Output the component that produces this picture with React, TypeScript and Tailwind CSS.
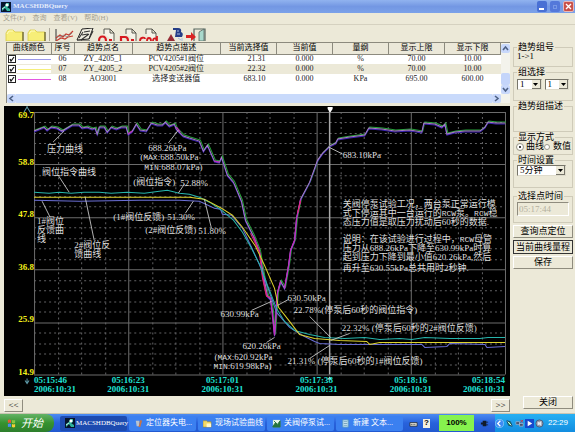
import type { ReactNode } from "react";

const songti = "font-['Liberation_Serif','Noto_Sans_CJK_SC',serif]";

function AppMark() {
  return (
    <svg viewBox="0 0 10 10" className="size-[10px] shrink-0">
      <rect width="10" height="10" fill="#06142c" />
      <path d="M5 1h3v3l-2 1 3 2v2H6L4 6 1 9V6l3-2z" fill="#2fb39a" />
      <path d="M5 2h2v2H5zM1 7l3-2" fill="#fff" stroke="#fff" strokeWidth=".7" />
    </svg>
  );
}

function TitleBar() {
  return (
    <header className="flex h-[13px] items-center bg-linear-to-b from-[#91b3ef] via-[#7397e3] to-[#7ba1e9] px-px">
      <AppMark />
      <h1 className="ml-[2px] flex-1 font-['Liberation_Serif',serif] text-[7px] leading-none font-bold text-[#e4ecfb]">
        MACSHDBQuery
      </h1>
      <div className="flex gap-[3px]">
        <button aria-label="最小化" className="flex h-[11px] w-[10px] items-end rounded-xs bg-[#4970d4] p-[2px]">
          <span className="h-[2px] w-[5px] bg-white" />
        </button>
        <button aria-label="最大化" className="h-[11px] w-[10px] rounded-xs bg-[#5478da] p-[3px]">
          <span className="block size-[4px] border border-[#7898e6]" />
        </button>
        <button aria-label="关闭窗口" className="h-[11px] w-[11px] rounded-xs border border-[#e6b9b9] bg-[#c9504a]">
          <svg viewBox="0 0 9 9">
            <path d="M2 2l5 5M7 2l-5 5" stroke="#fff" strokeWidth="1.4" />
          </svg>
        </button>
      </div>
    </header>
  );
}

function MenuBar() {
  return (
    <nav className="flex h-[12px] items-center gap-[7px] border-b border-[#d5d1c0] px-[3px] text-[7px] leading-none text-[#a5a190]">
      <button>文件(F)</button>
      <button>查询</button>
      <button>查看(V)</button>
      <button>帮助(H)</button>
    </nav>
  );
}

function ToolButton({ label, children }: { label: string; children: ReactNode }) {
  return (
    <button aria-label={label} className="h-[13px] w-[20px] shrink-0 overflow-hidden">
      <svg viewBox="0 0 20 13" className="h-[13px] w-[20px]" fill="none">
        {children}
      </svg>
    </button>
  );
}

function Folder() {
  return (
    <>
      <path d="M1 13V5l2-3h5l2 2h8v9z" fill="#f7ee78" stroke="#d8ca45" strokeWidth=".8" />
      <path d="M2 6l2-3h4" stroke="#fffbc0" />
      <path d="M18 4v9" stroke="#5a5430" strokeWidth="1.2" />
    </>
  );
}

function Sheet() {
  return <path d="M7 6V1h6l4 4v8M13 1v4h4" fill="#f5f3e8" stroke="#4c4c44" strokeWidth=".9" />;
}

function Toolbar() {
  return (
    <div className="flex h-[17px] items-start overflow-hidden pt-[3px] pl-[5px]">
      <ToolButton label="打开"><Folder /></ToolButton>
      <span className="w-[2px]" />
      <ToolButton label="打开组"><Folder /></ToolButton>
      <span className="mx-[2px] h-[13px] w-px bg-[#aca899]" />
      <span className="w-[3px]" />
      <ToolButton label="趋势曲线">
        <path d="M1 1v12" stroke="#333" />
        <path d="M1 10l4-3 3 2 3-3 3 1 4-4M1 13l5-3 4 1 3-2 5-1" stroke="#c73b30" strokeWidth="1.2" />
        <path d="M2 8l3 1 4-2 3 2 5-4" stroke="#777" strokeWidth=".7" />
      </ToolButton>
      <ToolButton label="打印">
        <path d="M7 1l11-1-4 11-12 1z" fill="#eeece0" stroke="#222" />
        <path d="M9 4l6-1M7 7l6-1M4 10l4-6M6 12l8-6M14 11l4-8M2 13h13" stroke="#333" strokeWidth="1.1" />
      </ToolButton>
      <span className="w-[2px]" />
      <ToolButton label="历史查询">
        <Sheet />
        <path d="M2 13c0-6 7-6 7 0M12 12h3" stroke="#d71920" strokeWidth="2.2" />
      </ToolButton>
      <span className="w-[2px]" />
      <ToolButton label="打印页面">
        <Sheet />
        <path d="M2 13V9h4c3 0 3 2 3 4M12 12h3" stroke="#d71920" strokeWidth="2.2" />
      </ToolButton>
      <ToolButton label="命令">
        <Sheet />
        <path d="M1 13c0-4 5-4 5-2M8 13c0-4 4-4 4 0M14 13c0-4 4-3 4 0M18 8v5" stroke="#d71920" strokeWidth="1.8" />
      </ToolButton>
      <span className="w-[7px]" />
      <ToolButton label="字体">
        <path d="M1 13l4-7 4 7z" fill="#982c35" />
        <path d="M7 0h5q4 0 3 4 3 1 1 5H9l1-7H7z" fill="#243d87" />
        <path d="M11 3h2M11 6h3M12 10l3 2M16 10v3" stroke="#a9bade" />
      </ToolButton>
      <ToolButton label="退出">
        <path d="M8 13V1h11v12" stroke="#55665f" strokeWidth="1.2" />
        <path d="M13 4l5-3v12h-5z" fill="#a9d9cc" stroke="#55665f" strokeWidth=".8" />
        <path d="M0 7h5V4l5 5-5 4v-3H0z" fill="#d92424" />
      </ToolButton>
    </div>
  );
}

const points = [
  { no: "06", name: "ZY_4205_1", desc: "PCV4205#1阀位", sel: "21.31", cur: "0.000", unit: "%", hi: "70.00", lo: "10.00", color: "bg-[#9a98e8]" },
  { no: "07", name: "ZY_4205_2", desc: "PCV4205#2阀位", sel: "22.32", cur: "0.000", unit: "%", hi: "70.00", lo: "10.00", color: "bg-[#f5ee7a]" },
  { no: "08", name: "AO3001", desc: "选择变送器值", sel: "683.10", cur: "0.000", unit: "KPa", hi: "695.00", lo: "600.00", color: "bg-[#e458e0]" },
];

const headings = ["曲线颜色", "序号", "趋势点名", "趋势点描述", "当前选择值", "当前值", "量纲", "显示上限", "显示下限"];

function ScrollArrow({ label, d }: { label: string; d: string }) {
  return (
    <button aria-label={label} className="size-[9px] shrink-0 rounded-xs bg-[#c8d8fb]">
      <svg viewBox="0 0 9 9" fill="none">
        <path d={d} stroke="#4d6185" strokeWidth="1.6" />
      </svg>
    </button>
  );
}

function PointTable() {
  return (
    <div className="ml-[6px] flex h-[61px] flex-col border-t border-l border-[#8c8a7e] bg-white">
      <div className="flex min-h-0 flex-1">
        <div className="flex-1">
          <table className="w-full table-fixed border-collapse text-center text-[8px] leading-none text-[#222]">
            <colgroup>
              <col className="w-[44px]" />
              <col className="w-[23px]" />
              <col className="w-[58px]" />
              <col />
              <col className="w-[56px]" />
              <col className="w-[56px]" />
              <col className="w-[56px]" />
              <col className="w-[56px]" />
              <col className="w-[56px]" />
            </colgroup>
            <thead>
              <tr className="h-[11px] bg-[#ebe8d9]">
                {headings.map((h) => (
                  <th key={h} className="border-r border-b border-[#8c8a7e] p-0 font-normal whitespace-nowrap text-black">
                    {h}
                  </th>
                ))}
              </tr>
            </thead>
            <tbody>
              {points.map((p) => (
                <tr key={p.no} className="h-[10px] even:bg-[#ece9d8]">
                  <td className="p-0">
                    <label className="flex items-center gap-[2px] bg-white pl-px">
                      <input
                        type="checkbox"
                        defaultChecked
                        aria-label={p.name}
                        className="sr-only"
                      />
                      <svg viewBox="0 0 8 8" className="size-[8px]" fill="none">
                        <rect x=".5" y=".5" width="7" height="7" fill="#fff" stroke="#222" />
                        <path d="M2 4l1 2 3-4" stroke="#111" strokeWidth="1.2" />
                      </svg>
                      <span className={`h-px flex-1 ${p.color}`} />
                    </label>
                  </td>
                  <td className="p-0">{p.no}</td>
                  <td className="p-0">{p.name}</td>
                  <td className="p-0 whitespace-nowrap">{p.desc}</td>
                  <td className="py-0 pr-[11px] pl-0 text-right">{p.sel}</td>
                  <td className="p-0">{p.cur}</td>
                  <td className="p-0">{p.unit}</td>
                  <td className="p-0">{p.hi}</td>
                  <td className="p-0">{p.lo}</td>
                </tr>
              ))}
            </tbody>
          </table>
        </div>
        <div className="flex w-[9px] flex-col bg-[#f3f3ec] pt-px">
          <ScrollArrow label="向上" d="M2 6l2.500-3 2.500 3" />
          <span className="flex-1" />
          <span className="h-[12px] rounded-xs bg-[#c4d5fa]" />
          <ScrollArrow label="向下" d="M2 3l2.500 3 2.500-3" />
        </div>
      </div>
      <div className="flex h-[9px] bg-[#f3f3ec] pr-[9px]">
        <ScrollArrow label="向左" d="M6 2l-3 2.500 3 2.500" />
        <span className="flex-1 bg-[#c9dafb]" />
        <ScrollArrow label="向右" d="M3 2l3 2.500-3 2.500" />
      </div>
    </div>
  );
}

const left = 35;
const right = 505;
const top = 112;
const bottom = 374;

const pressure =
  "35,131 40,129 45,127 48,130 52,127 58,128 63,131 68,128 73,125 80,125 83,128 88,127 93,129 96,128 98,134 100,127 105,127 108,132 112,127 117,129 122,127 127,127 129,134 133,131 137,124 141,130 147,131 152,123 158,125 163,125 166,122 170,126 175,124 177,129 180,132 184,136 190,138 200,141 204,151 208,145 215,161 220,162 222,157 228,175 234,182 242,201 246,220 254,236 260,251 264,275 268,296 271,299 273,312 275,335 277,305 278,292 281,281 285,288 289,265 291,250 295,240 297,218 301,199 310,182 318,160 323,153 330,146 336,143 338,139 350,137 365,135 369,128 382,129 395,131 410,130 422,132 424,123 435,124 442,127 445,124 447,134 455,132 465,131 480,131 485,127 488,122 496,123 505,123";

const command =
  "35,192 50,193 60,192 72,193 85,192 100,192 112,193 128,192 145,193 160,191 168,190 180,193 190,194 200,197 210,202 222,210 234,220 243,232 252,248 260,264 268,285 277,308 285,321 295,330 310,334 325,337 345,338 365,337 380,339 400,338 412,339 425,337 450,338 480,338 488,337 505,337";

const valve2 =
  "35,197 100,197 176,197 190,197 205,199 222,208 233,215 243,227 256,246 265,265 275,288 279,307 290,321 300,334 315,338 340,340 367,341 370,344 380,342 505,342";

const valve1 =
  "35,200 80,201 140,200 180,200 200,201 215,208 221,209 223,214 232,215 243,228 252,247 262,269 270,292 277,312 290,327 303,335 315,341 320,343 340,344 422,344 425,347 447,346 450,343 485,344 487,347 505,346";

const leaders =
  "M65 131L54 142M59 175L70 192M43 201L51 217M86 197L95 240M179 130L169 143M185 184L179 193M194 201L186 213M205 199L212 228M329 147L343 154M272 301L252 310M278 305L289 299M310 316L331 337M350 333L331 340M275 337L267 342M310 358L330 345";

const notes: [number, number, string][] = [
  [48, 152, "压力曲线"],
  [43, 175, "阀位指令曲线"],
  [149, 151, "688.26kPa"],
  [141, 160, "(MAX:688.50kPa"],
  [145, 170, "MIN:688.07kPa)"],
  [134, 185, "(阀位指令)"],
  [181, 186, "52.88%"],
  [114, 220, "(1#阀位反馈)"],
  [168, 220, "51.30%"],
  [146, 233, "(2#阀位反馈)"],
  [199, 234, "51.80%"],
  [38, 224, "1#阀位"],
  [38, 233, "反馈曲"],
  [38, 242, "线"],
  [75, 248, "2#阀位反"],
  [75, 257, "馈曲线"],
  [343, 158, "683.10kPa"],
  [343, 207, "关阀停泵试验工况，两台泵正常运行模"],
  [343, 216, "式下停运其中一台运行的RCW泵。RCW稳"],
  [343, 225, "态压力值是取压力扰动后60秒的数据."],
  [343, 242, "说明：在该试验进行过程中，RCW母管"],
  [343, 251, "压力从688.26kPa下降至630.99kPa时算"],
  [343, 260, "起到压力下降到最小值620.26kPa,然后"],
  [343, 271, "再升至630.55kPa总共用时2秒钟."],
  [221, 317, "630.99kPa"],
  [288, 301, "630.50kPa"],
  [294, 313, "22.78%(停泵后60秒的阀位指令)"],
  [342, 331, "22.32% (停泵后60秒的2#阀位反馈)"],
  [243, 349, "620.26kPa"],
  [215, 360, "(MAX:620.92kPa"],
  [214, 369, "MIN:619.98kPa)"],
  [288, 364, "21.31% (停泵后60秒的1#阀位反馈)"],
];

const times: [number, string, "start" | "middle" | "end"][] = [
  [35, "05:15:46", "start"],
  [129, "05:16:23", "middle"],
  [223, "05:17:01", "middle"],
  [317, "05:17:38", "middle"],
  [411, "05:18:16", "middle"],
  [505, "05:18:54", "end"],
];

const levels = [
  { value: "69.7", baseline: 118 },
  { value: "58.8", baseline: 165 },
  { value: "47.8", baseline: 217 },
  { value: "36.8", baseline: 270 },
  { value: "25.9", baseline: 322 },
  { value: "14.9", baseline: 374 },
];

function Note({ x, y, text }: { x: number; y: number; text: string }) {
  return (
    <text x={x} y={y}>
      {text.split(/([A-Z]{3})/).map((part, i) =>
        i % 2 ? (
          <tspan key={i} className="font-['Liberation_Mono',monospace] text-[8px]">{part}</tspan>
        ) : (
          part
        ),
      )}
    </text>
  );
}

function TrendChart() {
  const minorX = Array.from({ length: 21 }, (_, i) => i).filter((i) => i % 4);
  const minorY = Array.from({ length: 26 }, (_, i) => i).filter((i) => i % 5);

  return (
    <svg viewBox="5 106 505 289" className={`block h-auto w-full bg-black text-[9px] ${songti}`} fill="none">
      <g stroke="#626264" strokeDasharray="2 3" strokeWidth="1">
        {minorX.map((i) => {
          const x = Math.round(left + ((right - left) * i) / 20) + 0.5;
          return <path key={i} d={`M${x} ${top}V${bottom}`} />;
        })}
        {minorY.map((i) => {
          const y = Math.round(top + ((bottom - top) * i) / 25) + 0.5;
          return <path key={i} d={`M${left} ${y}H${right}`} />;
        })}
      </g>
      <g stroke="#6c6c6c">
        {levels.map((level, i) => {
          const x = left + 94 * i + 0.5;
          const y = Math.round(top + ((bottom - top) * i) / 5) + 0.5;
          return <path key={level.value} d={`M${x} ${top}V${bottom}M${left} ${y}H${right}`} />;
        })}
      </g>
      <path d="M330 110V374" stroke="#a8a8a8" strokeWidth="1.500" />
      <path d="M328 107h5v2l-2 3h-1l-2-3zM328 379l2-3 2 3z" fill="#fff" />
      <path d="M25 112l3-5 3 5M28 107v-1M26 380l2 3 2-3M28 378v5" stroke="#5e9aa8" />

      <polyline points={pressure} stroke="#26a33a" transform="translate(1 -1)" />
      <polyline points={pressure} stroke="#3a22b8" transform="translate(0 1)" />
      <polyline points={pressure} stroke="#a97fc4" strokeWidth="1" />
      <path d="M129 134l4-3M177 127l4 5M215 161l5 1M254 236l6 15 3 24 4 20 4 3 4 37 2-30 1-13 3-11M285 288l4-23 2-15 4-10 2-22 4-19" stroke="#c02bc0" strokeWidth="1.200" />
      <path d="M251 233l9 19 3 26 4 18 4 1M298 213l3-12" stroke="#e22a6d" />
      <polyline points={valve1} stroke="#6b6fd6" />
      <polyline points={command} stroke="#27b5ac" />
      <polyline points={valve2} stroke="#dfd42c" />
      <path d={leaders} stroke="#dcdcdc" strokeWidth=".8" />

      <g fill="#dedede">
        {notes.map(([x, y, text]) => (
          <Note key={`${x}-${y}`} x={x} y={y} text={text} />
        ))}
      </g>
      <g fill="#f4f01c" textAnchor="end" className="font-bold">
        {levels.map((level) => (
          <text key={level.value} x={35} y={level.baseline}>{level.value}</text>
        ))}
      </g>
      <g fill="#1fe0d4" className="font-bold">
        {times.map(([x, time, anchor]) => (
          <text key={time} textAnchor={anchor}>
            <tspan x={x} y={382}>{time}</tspan>
            <tspan x={x} y={391}>2006:10:31</tspan>
          </text>
        ))}
      </g>
    </svg>
  );
}

const raised = "border border-t-white border-l-white border-r-[#8f8c7e] border-b-[#8f8c7e] bg-[#ece9d8] text-center leading-none text-black";

function Group({ title, className, children }: { title: string; className: string; children?: ReactNode }) {
  return (
    <fieldset className={`min-w-0 border border-[#cfcbb9] px-[3px] ${className}`}>
      <legend className="px-px text-[9px] leading-[10px] whitespace-nowrap text-black">{title}</legend>
      {children}
    </fieldset>
  );
}

function Dropdown({ label, options }: { label: string; options: string[] }) {
  return (
    <div className="relative min-w-0 flex-1">
      <select
        aria-label={label}
        className="block h-[11px] w-full appearance-none border border-t-[#77756a] border-r-[#dedbcb] border-b-[#dedbcb] border-l-[#77756a] bg-white px-[2px] text-[9px] leading-[9px] text-black"
      >
        {options.map((o) => (
          <option key={o}>{o}</option>
        ))}
      </select>
      <span className="pointer-events-none absolute top-px right-px flex h-[9px] w-[9px] items-center justify-center border-r border-b border-[#77756a] bg-[#ece9d8]">
        <svg viewBox="0 0 5 3" className="h-[3px] w-[5px]">
          <path d="M0 0h5L2.500 3z" fill="#000" />
        </svg>
      </span>
    </div>
  );
}

function Mode({ label, checked }: { label: string; checked?: boolean }) {
  return (
    <label className="flex items-center gap-[3px] whitespace-nowrap">
      <input
        type="radio"
        name="mode"
        defaultChecked={checked}
        className="size-[6px] appearance-none rounded-full border border-[#99978a] bg-white checked:border-2 checked:border-white checked:bg-black checked:outline checked:outline-[#99978a]"
      />
      {label}
    </label>
  );
}

function SidePanel() {
  return (
    <aside className="flex w-[60px] shrink-0 flex-col text-[9px] leading-none text-black">
      <Group title="趋势组号" className="h-[25px]">
        <output className="block">1-&gt;1</output>
      </Group>
      <Group title="组选择" className="h-[34px]">
        <div className="mt-[2px] flex gap-[3px]">
          <Dropdown label="组" options={["1", "2", "3"]} />
          <Dropdown label="子组" options={["1", "2", "3"]} />
        </div>
      </Group>
      <Group title="趋势组描述" className="h-[31px]" />
      <Group title="显示方式" className="h-[23px]">
        <div className="flex justify-between">
          <Mode label="曲线" checked />
          <Mode label="数值" />
        </div>
      </Group>
      <Group title="时间设置" className="h-[33px]">
        <div className="mr-[3px] flex">
          <Dropdown label="时间" options={["5分钟", "10分钟", "30分钟"]} />
        </div>
      </Group>
      <Group title="选择点时间" className="mt-[3px] h-[32px]">
        <input
          aria-label="时间点"
          disabled
          defaultValue="05:17:44"
          className="mt-px block h-[14px] w-full border border-t-[#8f8c7e] border-r-white border-b-white border-l-[#8f8c7e] bg-[#ece9d8] px-px text-[9px] text-[#b3b09f]"
        />
      </Group>
      <div className="mt-[2px] flex flex-col gap-[2px]">
        <button className={`h-[13px] ${raised}`}>查询点定位</button>
        <button className="h-[14px] border border-[#333] bg-[#ece9d8] text-center leading-none">当前曲线量程</button>
        <button className={`h-[13px] ${raised}`}>保存</button>
      </div>
      <span className="flex-1" />
      <button className={`mb-[4px] ml-[10px] h-[13px] ${raised}`}>关闭</button>
    </aside>
  );
}

function Task({ title, icon, active }: { title: string; icon: ReactNode; active?: boolean }) {
  return (
    <button
      className={`flex h-[15px] max-w-[67px] min-w-0 flex-1 items-center rounded-xs pl-[5px] leading-none whitespace-nowrap text-white ${
        active ? "gap-px bg-[#1d4bb0] text-[7px]" : "gap-[3px] bg-[#3b80f0] text-[8px]"
      }`}
    >
      {icon}
      {title}
    </button>
  );
}

function Glyph({ children }: { children: ReactNode }) {
  return (
    <svg viewBox="0 0 10 10" className="size-[9px] shrink-0" fill="none">
      {children}
    </svg>
  );
}

function TaskBar() {
  return (
    <footer className="flex h-[18px] items-center bg-linear-to-b from-[#4b8bf2] via-[#2862dc] to-[#2259d0]">
      <button className="mr-[6px] flex h-full w-[54px] items-center gap-[5px] rounded-r-lg bg-linear-to-b from-[#63b365] via-[#36922f] to-[#2d7e2c] pl-[7px] font-['Liberation_Sans','Noto_Sans_CJK_SC',sans-serif] text-[11px] leading-none text-white italic">
        <Glyph>
          <path d="M1 1q2-1 3.500 0v3.500q-1.500-1-3.500 0z" fill="#ef5630" />
          <path d="M5.500 1q2 1 3.500 0v3.500q-1.500 1-3.500 0z" fill="#87c83f" />
          <path d="M1 5.500q2-1 3.500 0V9Q3 8 1 9z" fill="#4b8af0" />
          <path d="M5.500 5.500q2 1 3.500 0V9q-1.500 1-3.500 0z" fill="#f8ce37" />
        </Glyph>
        开始
      </button>
      <div className="flex min-w-0 flex-1 gap-[2px]">
        <Task title="MACSHDBQuery" active icon={<AppMark />} />
        <Task
          title="定位器失电..."
          icon={
            <Glyph>
              <path d="M2 2h4v6H3z" fill="#b9c3cf" />
              <path d="M5 9l2-8 2 1-2 7z" fill="#c87545" />
            </Glyph>
          }
        />
        <Task
          title="现场试验曲线"
          icon={
            <Glyph>
              <path d="M0 2h4l1 1h4v6H0z" fill="#f3d967" stroke="#9a8334" strokeWidth=".6" />
              <path d="M4 5h5v4H4z" fill="#fff8cc" />
            </Glyph>
          }
        />
        <Task
          title="关阀停泵试..."
          icon={
            <Glyph>
              <path d="M1 1h8v8H1z" fill="#e8f6e9" />
              <path d="M1 8l3-4 2 2 3-4v7H1zM2 2l3 3" fill="#26743d" stroke="#26743d" />
            </Glyph>
          }
        />
        <Task
          title="新建 文本..."
          icon={
            <Glyph>
              <path d="M2 1h6v8H2z" fill="#d1edf7" stroke="#5e9bc1" />
              <path d="M3 3h4M3 5h4M3 7h4" stroke="#487d9f" strokeWidth=".7" />
            </Glyph>
          }
        />
      </div>
      <div className="flex h-full items-center gap-[5px] pr-[4px]">
        <Glyph>
          <path d="M1 4h8v4H1z" fill="#e6e6dc" stroke="#202020" strokeWidth=".8" />
          <path d="M2 6h6" stroke="#222" strokeDasharray="1 1" />
        </Glyph>
        <span className="flex h-[9px] w-[7px] items-center justify-center bg-[#f3efe0] font-['Liberation_Sans',sans-serif] text-[8px] leading-none font-bold text-black">?</span>
      </div>
      <div className="ml-[5px] flex h-[16px] w-[35px] items-center justify-center bg-[#86f24e] font-['Liberation_Sans',sans-serif] text-[8px] leading-none font-bold text-black">
        100%
      </div>
      <div className="flex items-center px-[6px]">
        <Glyph>
          <path d="M1 4h2V2h4v1h2v1H7v2h2v1H7v1H3V6H1z" fill="#111b2b" />
        </Glyph>
      </div>
      <div className="flex h-full items-center gap-[1px] bg-linear-to-b from-[#27b0f3] to-[#128de0] pr-[7px]">
        <Glyph>
          <circle cx="5" cy="5" r="4.500" fill="#3c8bf3" stroke="#b9dcff" strokeWidth=".6" />
          <path d="M6 2L3 5l3 3" stroke="#fff" strokeWidth="1.400" />
        </Glyph>
        <Glyph>
          <path d="M2 2l4 1 2 5-4-1z" fill="#37b559" stroke="#16406c" />
          <path d="M3 3l4 4" stroke="#e6f4ff" />
        </Glyph>
        <Glyph>
          <path d="M1 3h4v3H1zM5 5h4v3H5z" fill="#435271" stroke="#c5c7d7" strokeWidth=".6" />
          <path d="M6 1l3 3M9 1L6 4" stroke="#db3038" />
        </Glyph>
        <Glyph>
          <path d="M0 0h10v10H0z" fill="#1649ce" />
          <path d="M3 2l5 3-5 3z" fill="#fff" />
        </Glyph>
        <Glyph>
          <circle cx="5" cy="5" r="4" fill="#929bb0" stroke="#4b5874" />
          <path d="M3 3v4l2-1 2 2V2L5 4z" fill="#e5eaf1" />
        </Glyph>
        <time className="ml-[3px] font-['Liberation_Sans',sans-serif] text-[8px] leading-none text-white">22:29</time>
      </div>
    </footer>
  );
}

export default function App() {
  return (
    <div className={`flex min-h-screen flex-col bg-[#ece9d8] ${songti}`}>
      <TitleBar />
      <MenuBar />
      <Toolbar />
      <main className="flex flex-1 gap-[3px] border-b border-[#c9c5b3] pr-[2px]">
        <div className="flex min-w-0 flex-1 flex-col">
          <PointTable />
          <div className="mt-[3px] ml-[4px]">
            <TrendChart />
          </div>
          <div className="mt-[3px] ml-[4px] flex justify-between">
            <button aria-label="后退" className={`h-[13px] w-[19px] text-[9px] ${raised}`}>&lt;&lt;</button>
            <button aria-label="前进" className={`h-[13px] w-[19px] text-[9px] ${raised}`}>&gt;&gt;</button>
          </div>
        </div>
        <SidePanel />
      </main>
      <TaskBar />
    </div>
  );
}
